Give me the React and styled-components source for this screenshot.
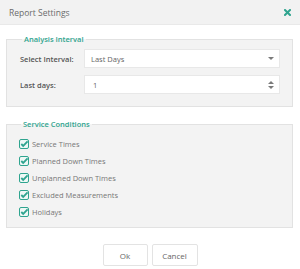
import React, { useState } from 'react';
import styled, { createGlobalStyle } from 'styled-components';

const GlobalStyle = createGlobalStyle`
  html, body {
    margin: 0;
    padding: 0;
    background: #ffffff;
  }
  body {
    font-family: 'Open Sans', 'Liberation Sans', sans-serif;
  }
`;

const teal = '#2fa48f';

const Dialog = styled.div`
  width: 300px;
  height: 269px;
  background: #ffffff;
  display: flex;
  flex-direction: column;
  box-sizing: border-box;
`;

const Header = styled.div`
  height: 25px;
  flex: none;
  box-sizing: border-box;
  background: #f2f2f2;
  border-bottom: 1px solid #e9e9e9;
  display: flex;
  align-items: center;
  justify-content: space-between;
  padding: 0 9px 0 9px;
`;

const Title = styled.div`
  font-size: 8.5px;
  color: #6b6b6b;
`;

const CloseButton = styled.button`
  border: 0;
  background: none;
  padding: 0;
  width: 7px;
  height: 7px;
  display: flex;
  cursor: pointer;
`;

const Body = styled.div`
  padding: 9px 7px 0 6px;
  display: flex;
  flex-direction: column;
  gap: 12px;
`;

const Group = styled.fieldset`
  margin: 0;
  border: 1px solid #e2e2e2;
  background: #f3f3f3;
  padding: ${p => p.$pad};
  min-width: 0;
`;

const Legend = styled.legend`
  margin-left: 2px;
  padding: 0 2px;
  font-size: 7.5px;
  font-weight: 600;
  color: ${teal};
`;

const FormRow = styled.div`
  display: flex;
  align-items: center;
  height: 19px;
  & + & {
    margin-top: 7px;
  }
`;

const Label = styled.label`
  width: 64px;
  flex: none;
  font-size: 7.5px;
  font-weight: 600;
  color: #555555;
`;

const Field = styled.div`
  flex: 1;
  height: 19px;
  box-sizing: border-box;
  background: #ffffff;
  border: 1px solid #e8e8e8;
  display: flex;
  align-items: center;
  justify-content: space-between;
  padding: 0 5px 0 6px;
  font-size: 7.5px;
  color: #666666;
`;

const Value = styled.span`
  padding-left: ${p => p.$indent || 0}px;
`;

const Arrows = styled.span`
  display: flex;
  flex-direction: column;
  gap: 2px;
`;

const CheckList = styled.div`
  display: flex;
  flex-direction: column;
  gap: 7px;
`;

const CheckRow = styled.label`
  display: flex;
  align-items: center;
  gap: 3px;
  height: 10px;
  font-size: 7.5px;
  color: #777777;
  cursor: pointer;
`;

const Box = styled.span`
  width: 10px;
  height: 10px;
  flex: none;
  display: flex;
`;

const Footer = styled.div`
  display: flex;
  justify-content: center;
  gap: 4px;
  margin-top: 16px;
`;

const Button = styled.button`
  width: ${p => p.$w}px;
  height: 22px;
  box-sizing: border-box;
  background: #ffffff;
  border: 1px solid #e3e3e3;
  border-radius: 2px;
  font-family: 'Open Sans', 'Liberation Sans', sans-serif;
  font-size: 8px;
  color: #666666;
  padding: 0;
  cursor: pointer;
`;

const Triangle = ({ up }) => (
  <svg width="6" height="3" viewBox="0 0 6 3">
    <path d={up ? 'M0 3 L3 0 L6 3 Z' : 'M0 0 L6 0 L3 3 Z'} fill="#7a7a7a" />
  </svg>
);

const CheckIcon = () => (
  <svg width="10" height="10" viewBox="0 0 10 10">
    <rect x="0.5" y="0.5" width="9" height="9" rx="1.5" fill="#eef8f5" stroke={teal} />
    <path d="M2.3 5 L4.2 6.9 L8.6 2.4" fill="none" stroke={teal} strokeWidth="1.8" />
  </svg>
);

const CloseIcon = () => (
  <svg width="7" height="7" viewBox="0 0 7 7">
    <path d="M1 1 L6 6 M6 1 L1 6" stroke={teal} strokeWidth="2" strokeLinecap="square" />
  </svg>
);

const conditions = [
  'Service Times',
  'Planned Down Times',
  'Unplanned Down Times',
  'Excluded Measurements',
  'Holidays',
];

const App = () => {
  const [checked, setChecked] = useState(conditions.map(() => true));
  return (
    <>
      <GlobalStyle />
      <Dialog>
        <Header>
          <Title>Report Settings</Title>
          <CloseButton aria-label="close">
            <CloseIcon />
          </CloseButton>
        </Header>
        <Body>
          <Group $pad="5px 12px 12px 13px">
            <Legend>Analysis Interval</Legend>
            <FormRow>
              <Label>Select Interval:</Label>
              <Field>
                <Value>Last Days</Value>
                <Triangle />
              </Field>
            </FormRow>
            <FormRow>
              <Label>Last days:</Label>
              <Field>
                <Value $indent={2}>1</Value>
                <Arrows>
                  <Triangle up />
                  <Triangle />
                </Arrows>
              </Field>
            </FormRow>
          </Group>
          <Group $pad="10px 12px 10px 12px">
            <Legend>Service Conditions</Legend>
            <CheckList>
              {conditions.map((c, i) => (
                <CheckRow
                  key={c}
                  onClick={() => setChecked(checked.map((v, j) => (j === i ? !v : v)))}
                >
                  <Box>{checked[i] && <CheckIcon />}</Box>
                  {c}
                </CheckRow>
              ))}
            </CheckList>
          </Group>
        </Body>
        <Footer>
          <Button $w={45}>Ok</Button>
          <Button $w={46}>Cancel</Button>
        </Footer>
      </Dialog>
    </>
  );
};

export default App;
